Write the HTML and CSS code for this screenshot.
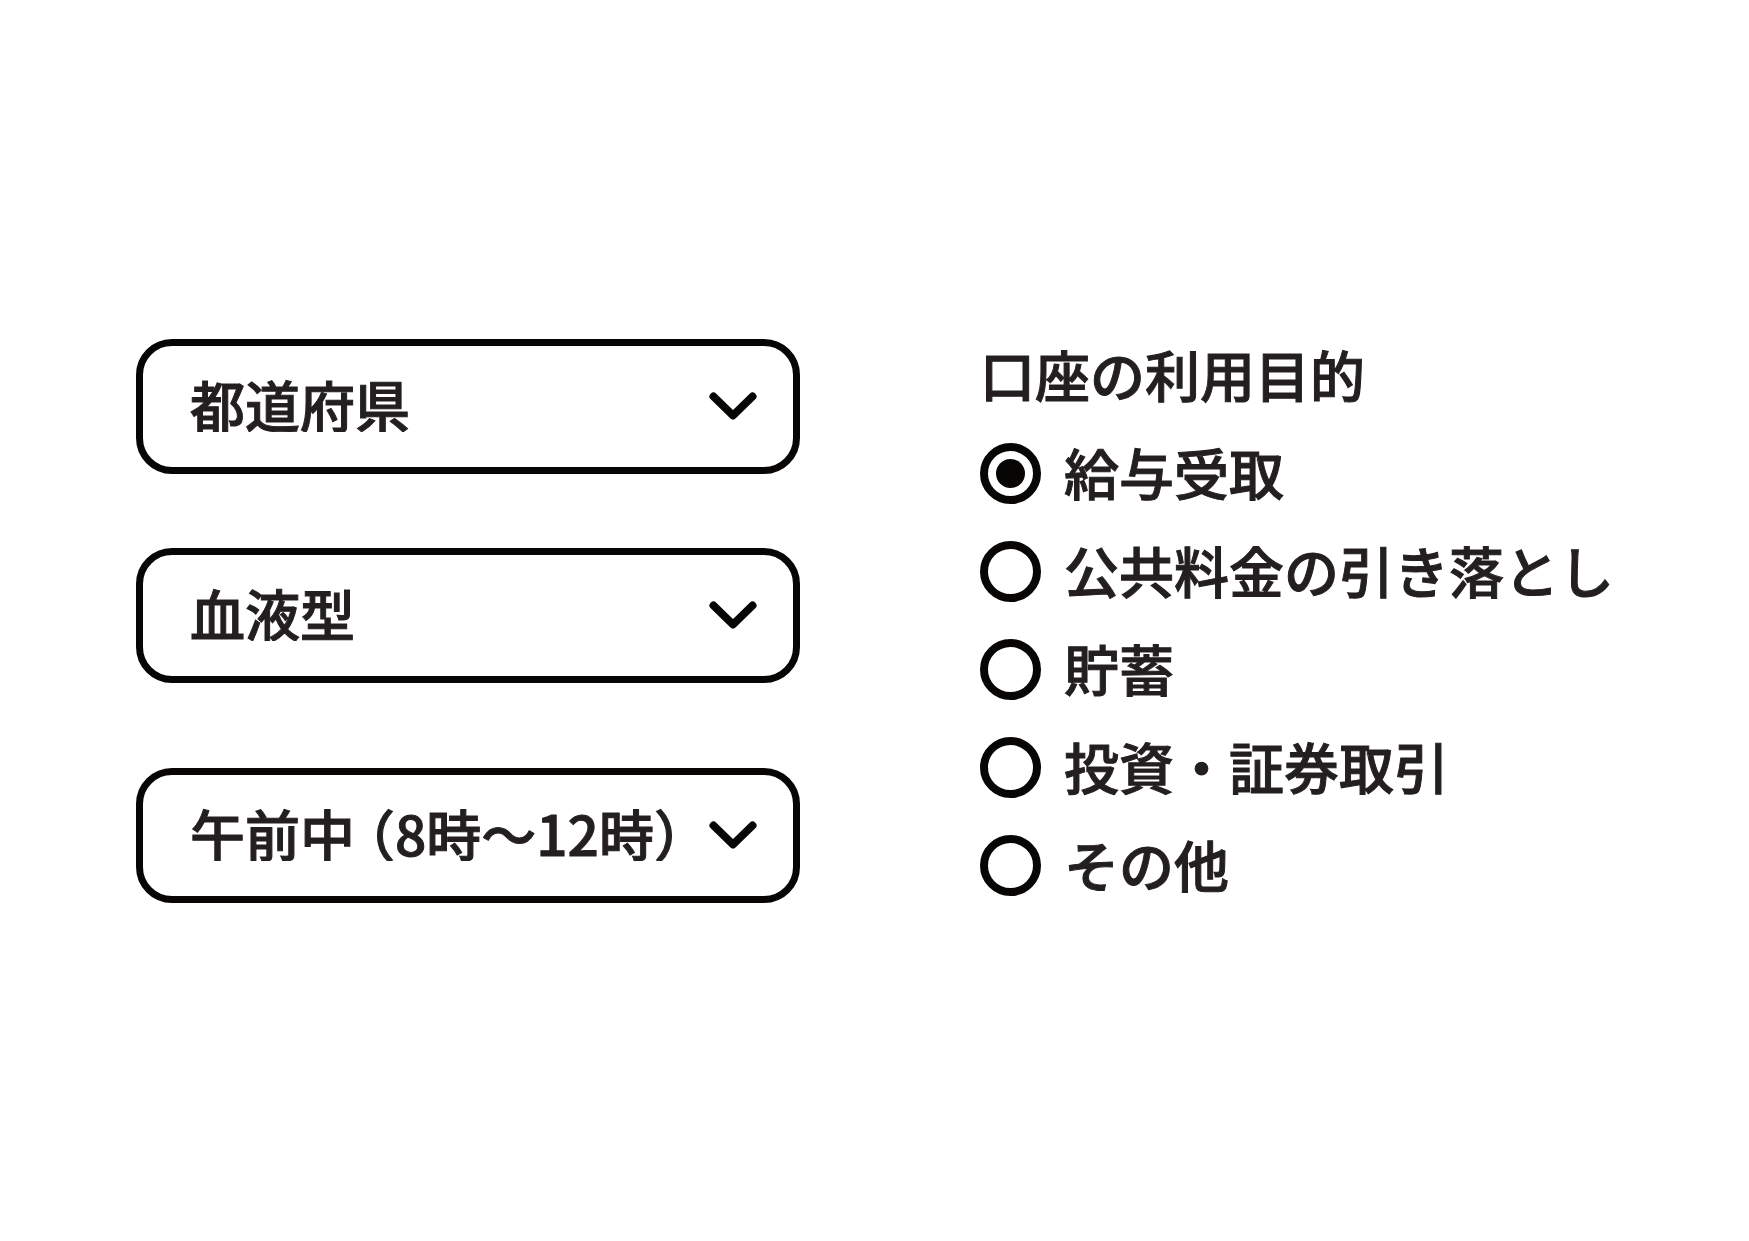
FILE: index.html
```html
<!DOCTYPE html>
<html lang="ja">
<head>
<meta charset="utf-8">
<meta name="viewport" content="width=device-width, initial-scale=1">
<title>口座の利用目的</title>
<link rel="stylesheet" href="styles.css">
</head>
<body>
<form class="form">
  <div class="selects">
    <div class="select">
      <select class="select-input" aria-label="都道府県"><option>都道府県</option></select>
      <svg class="chevron" viewBox="0 0 48 28" aria-hidden="true"><path d="M4.500 4.500L24 23.500L43.500 4.500"/></svg>
    </div>
    <div class="select">
      <select class="select-input" aria-label="血液型"><option>血液型</option></select>
      <svg class="chevron" viewBox="0 0 48 28" aria-hidden="true"><path d="M4.500 4.500L24 23.500L43.500 4.500"/></svg>
    </div>
    <div class="select select-time">
      <select class="select-input" aria-label="時間帯"><option>午前中 （8時〜12時）</option></select>
      <svg class="chevron" viewBox="0 0 48 28" aria-hidden="true"><path d="M4.500 4.500L24 23.500L43.500 4.500"/></svg>
    </div>
  </div>

  <fieldset class="purpose">
    <legend class="purpose-title">口座の利用目的</legend>
    <label class="choice"><input class="radio" type="radio" name="purpose" checked><span class="choice-text">給与受取</span></label>
    <label class="choice"><input class="radio" type="radio" name="purpose"><span class="choice-text">公共料金の引き落とし</span></label>
    <label class="choice"><input class="radio" type="radio" name="purpose"><span class="choice-text">貯蓄</span></label>
    <label class="choice"><input class="radio" type="radio" name="purpose"><span class="choice-text">投資・証券取引</span></label>
    <label class="choice"><input class="radio" type="radio" name="purpose"><span class="choice-text">その他</span></label>
  </fieldset>
</form>
</body>
</html>
```
FILE: styles.css
```css
* {
  box-sizing: border-box;
}

body {
  margin: 0;
  background: #fff;
  color: #231f20;
  font-family: "Noto Sans CJK JP", sans-serif;
  font-size: 55px;
  font-weight: 500;
  line-height: 57px;
  -webkit-text-stroke: 1px #231f20;
}

.form {
  display: grid;
  grid-template-columns: 664fr 649fr;
  align-items: center;
  gap: 180px;
  min-height: 100vh;
  padding: 0 120px 0 136px;
}

.selects {
  display: flex;
  flex-direction: column;
  gap: 74px;
}

.select {
  display: grid;
  align-items: center;
}

.select-time {
  margin-top: 11px;
}

.select-input {
  grid-area: 1 / 1;
  width: 100%;
  margin: 0;
  padding: 29px 47px 35px;
  appearance: none;
  border: 7px solid #070604;
  border-radius: 36px;
  background: #fff;
  color: inherit;
  font: inherit;
  font-feature-settings: "halt";
}

.chevron {
  grid-area: 1 / 1;
  justify-self: end;
  width: 48px;
  height: 28px;
  margin-right: 43px;
  fill: none;
  stroke: #070604;
  stroke-width: 8;
  stroke-linecap: round;
  stroke-linejoin: round;
  pointer-events: none;
}

.purpose {
  min-width: 0;
  margin: 0;
  padding: 0;
  border: 0;
}

.purpose-title {
  padding: 0 0 6px;
  line-height: 92px;
}

.choice {
  display: flex;
  align-items: center;
  gap: 23px;
  min-height: 98px;
  white-space: nowrap;
}

.choice-text {
  padding-bottom: 4px;
}

.radio {
  display: grid;
  flex: none;
  place-content: center;
  width: 61px;
  height: 61px;
  margin: 0;
  appearance: none;
  border: 8px solid #070604;
  border-radius: 50%;
  background: #fff;
}

.radio:checked::before {
  content: "";
  width: 29px;
  height: 29px;
  border-radius: 50%;
  background: #070604;
}
```
